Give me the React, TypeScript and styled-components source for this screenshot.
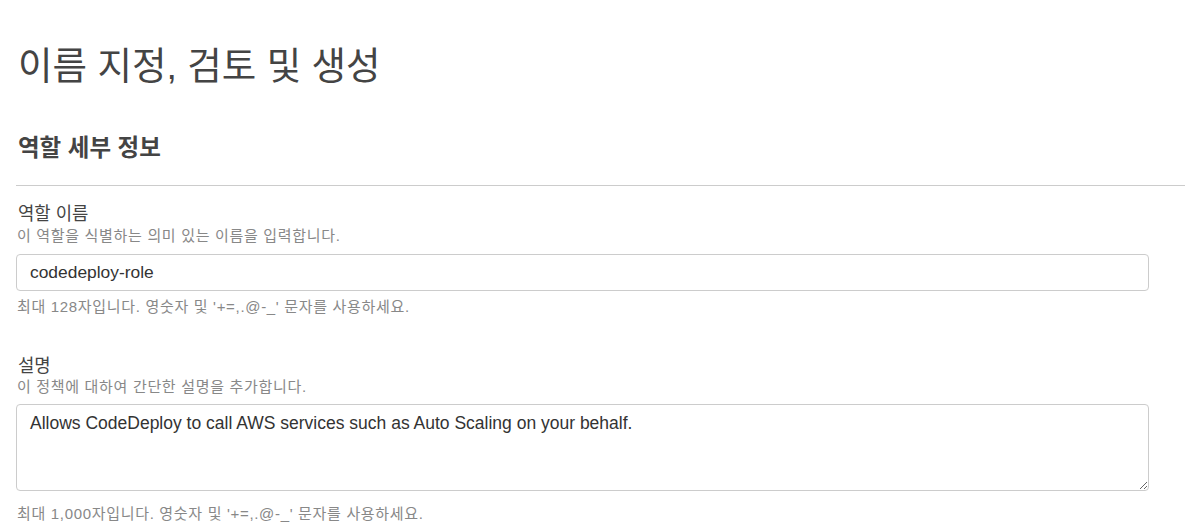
import React from "react";
import styled, { createGlobalStyle } from "styled-components";

const Global = createGlobalStyle`
  html, body { margin: 0; padding: 0; background: #fff; }
  body {
    font-family: "Liberation Sans", Arial, "Noto Sans CJK KR", sans-serif;
    color: #444;
  }
`;

const Page = styled.div`
  padding: 0 0 0 16px;
  width: 1185px;
  box-sizing: border-box;
`;

const Title = styled.h1`
  margin: 0;
  padding: 41px 0 0 2px;
  font-size: 37.5px;
  line-height: 50px;
  font-weight: 400;
  color: #444;
`;

const SectionTitle = styled.h2`
  margin: 0;
  padding: 41px 0 0 2px;
  font-size: 23.5px;
  line-height: 32px;
  font-weight: 700;
  color: #444;
  padding-bottom: 21px;
  border-bottom: 1px solid #ccc;
`;

const Field = styled.div<{ $top: number }>`
  display: flex;
  flex-direction: column;
  padding-top: ${(p) => p.$top}px;
  width: 1133px;
`;

const Label = styled.label`
  font-size: 17.8px;
  line-height: 24px;
  color: #444;
  padding-left: 2px;
`;

const Hint = styled.div<{ $top?: number }>`
  font-size: 15px;
  letter-spacing: 0.68px;
  line-height: 18px;
  color: #888;
  padding-left: 1px;
  margin-top: ${(p) => p.$top ?? 0}px;
`;

const Input = styled.input`
  margin-top: 9px;
  height: 37px;
  box-sizing: border-box;
  border: 1px solid #ccc;
  border-radius: 4px;
  padding: 0 13px;
  font-family: "Liberation Sans", Arial, sans-serif;
  font-size: 17.4px;
  color: #333;
  background: #fff;
  outline: none;
`;

const TextArea = styled.textarea`
  margin-top: 8px;
  height: 87px;
  box-sizing: border-box;
  border: 1px solid #ccc;
  border-radius: 4px;
  padding: 7px 13px;
  font-family: "Liberation Sans", Arial, sans-serif;
  font-size: 17.5px;
  line-height: 22px;
  color: #333;
  background: #fff;
  outline: none;
  resize: vertical;
`;

export default function App() {
  return (
    <Page>
      <Global />
      <Title>이름 지정, 검토 및 생성</Title>
      <SectionTitle>역할 세부 정보</SectionTitle>
      <Field $top={16}>
        <Label>역할 이름</Label>
        <Hint $top={1}>이 역할을 식별하는 의미 있는 이름을 입력합니다.</Hint>
        <Input defaultValue="codedeploy-role" />
        <Hint $top={7}>최대 128자입니다. 영숫자 및 '+=,.@-_' 문자를 사용하세요.</Hint>
      </Field>
      <Field $top={38}>
        <Label>설명</Label>
        <Hint $top={0}>이 정책에 대하여 간단한 설명을 추가합니다.</Hint>
        <TextArea defaultValue="Allows CodeDeploy to call AWS services such as Auto Scaling on your behalf." />
        <Hint $top={14}>최대 1,000자입니다. 영숫자 및 '+=,.@-_' 문자를 사용하세요.</Hint>
      </Field>
    </Page>
  );
}
